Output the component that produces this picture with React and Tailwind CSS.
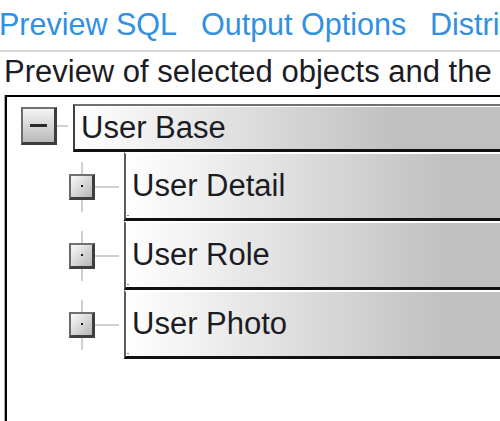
import React from "react";

function ChildRow({ label }) {
  return (
    <div className="flex h-[69px]">
      <div className="flex w-[117px] shrink-0 items-center pl-[62px]">
        <div className="flex flex-col items-center">
          <div className="h-[12px] w-[2px] bg-[#cfcfcf]" />
          <div className="flex h-[26px] w-[26px] items-center justify-center border-l-2 border-t-2 border-r-[3px] border-b-[3px] border-l-[#6a6a6a] border-t-[#707070] border-r-[#3e3e3e] border-b-[#3e3e3e] bg-[linear-gradient(135deg,#fafafa,#b6b6b6)]">
            <div className="h-[2px] w-[2px] bg-[#1a1a1a]" />
          </div>
          <div className="h-[12px] w-[2px] bg-[#cfcfcf]" />
        </div>
        <div className="h-[2px] w-[24px] bg-[#cfcfcf]" />
      </div>
      <div className="relative flex flex-1 items-center border-l-2 border-t-2 border-b-[3px] border-l-[#5c5c5c] border-t-white border-b-[#111] bg-[linear-gradient(to_right,#ffffff,#c0c0c0_320px)] pl-[6px] whitespace-nowrap text-[#1c1c24]">
        {label}
        <span className="absolute bottom-[2px] left-[1px] h-[1px] w-[2px] bg-[#8a8a8a]" />
      </div>
    </div>
  );
}

export default function App() {
  return (
    <div
      className="flex h-[421px] w-[500px] flex-col overflow-hidden bg-white text-[31px] leading-[34px]"
      style={{ fontFamily: '"Liberation Sans", Arial, sans-serif' }}
    >
      <div className="flex h-[52px] shrink-0 border-b-2 border-[#d8d8d8] pt-[7px] whitespace-nowrap text-[30.5px] text-[#3090e2]">
        <div className="-ml-[1px] w-[202px] shrink-0">Preview SQL</div>
        <div className="w-[229px] shrink-0">Output Options</div>
        <div className="shrink-0">Distribution</div>
      </div>
      <div className="h-[43px] shrink-0 pl-[4px] pt-[3px] whitespace-nowrap text-[#1c1c24]">
        Preview of selected objects and the
      </div>
      <div className="ml-[4px] flex flex-1 border-l border-[#a8a8a8]">
        <div className="flex flex-1 flex-col border-l-2 border-t-2 border-black pt-[7px]">
          <div className="flex h-[48px] items-start">
            <div className="ml-[14px] mt-[3px] flex h-[38px] w-[36px] shrink-0 items-center justify-center border-l-2 border-t-2 border-r-[3px] border-b-[3px] border-l-[#6a6a6a] border-t-[#707070] border-r-[#3c3c3c] border-b-[#3c3c3c] bg-[linear-gradient(to_bottom,#f4f4f4,#bababa)]">
              <div className="h-[3px] w-[17px] bg-[#2a2a2a]" />
            </div>
            <div className="mt-[21px] h-[2px] w-[11px] shrink-0 bg-[#cfcfcf]" />
            <div className="w-[5px] shrink-0" />
            <div className="flex h-[48px] flex-1 items-center border-l-2 border-t-2 border-b-[3px] border-l-[#404040] border-t-[#707070] border-b-[#111] bg-[linear-gradient(to_right,#ffffff,#c0c0c0_320px)] pl-[6px] whitespace-nowrap text-[#1c1c24] shadow-[inset_0_1px_0_#ffffff]">
              User Base
            </div>
          </div>
          <div className="flex flex-col">
            <ChildRow label="User Detail" />
            <ChildRow label="User Role" />
            <ChildRow label="User Photo" />
          </div>
        </div>
      </div>
    </div>
  );
}
